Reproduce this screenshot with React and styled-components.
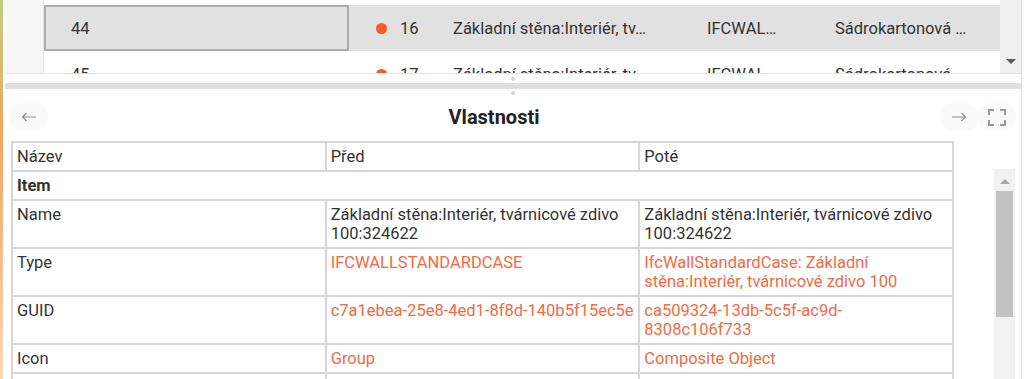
import React from "react";
import styled, { createGlobalStyle } from "styled-components";

const GlobalStyle = createGlobalStyle`
  html, body {
    margin: 0;
    padding: 0;
    background: #fff;
  }
  body {
    font-family: Roboto, "Noto Sans", "Liberation Sans", sans-serif;
    font-size: 16.5px;
    color: #333;
  }
`;

const Screen = styled.div`
  display: flex;
  width: 1024px;
  height: 379px;
  overflow: hidden;
  background: #fff;
`;

const AccentStripe = styled.div`
  width: 3px;
  flex-shrink: 0;
  margin-right: 2px;
  background: linear-gradient(to bottom, #bcd27c 0%, #f0a660 34%, #f4bf8f 70%, #f8d9bd 100%);
`;

const Workspace = styled.div`
  flex: 1;
  min-width: 0;
  display: flex;
  flex-direction: column;
  border-right: 1px solid #dfdfdf;
  margin-right: 2px;
`;

/* ---------- top grid ---------- */

const GridPanel = styled.div`
  display: flex;
  height: 73px;
  flex-shrink: 0;
  border-bottom: 1px solid #e3e3e3;
`;

const RowHeaderColumn = styled.div`
  width: 38px;
  flex-shrink: 0;
  background: #f7f7f7;
  border-right: 1px solid #e9e9e9;
`;

const GridRows = styled.div`
  flex: 1;
  min-width: 0;
  overflow: hidden;
  padding-top: 5px;
  display: flex;
  flex-direction: column;
`;

const GridRow = styled.div`
  display: flex;
  align-items: center;
  height: 46px;
  flex-shrink: 0;
  background: ${(p) => (p.$selected ? "#e1e1e1" : "#fff")};
`;

const IdCell = styled.div`
  width: 305px;
  height: 100%;
  box-sizing: border-box;
  flex-shrink: 0;
  display: flex;
  align-items: center;
  padding-left: 25px;
  border: 2px solid ${(p) => (p.$focused ? "#acacac" : "transparent")};
`;

const StatusCell = styled.div`
  width: 104px;
  flex-shrink: 0;
  display: flex;
  align-items: center;
`;

const StatusDot = styled.span`
  width: 11px;
  height: 11px;
  border-radius: 50%;
  background: #f15a29;
  margin-left: 27px;
  margin-right: 13px;
`;

const TextCell = styled.div`
  width: ${(p) => p.$w}px;
  flex-shrink: 0;
  white-space: nowrap;
  overflow: hidden;
`;

const GridScroll = styled.div`
  width: 21px;
  flex-shrink: 0;
  background: #f0f0f0;
  display: flex;
  flex-direction: column;
  justify-content: flex-end;
  align-items: center;
  padding-bottom: 9px;
  box-sizing: border-box;
`;

const ArrowDown = styled.span`
  width: 0;
  height: 0;
  border-left: 5px solid transparent;
  border-right: 5px solid transparent;
  border-top: 5px solid #5c5c5c;
`;

/* ---------- splitter ---------- */

const Splitter = styled.div`
  display: flex;
  flex-direction: column;
  align-items: center;
  padding-top: 3px;
  flex-shrink: 0;
`;

const SplitterDot = styled.span`
  width: 4px;
  height: 4px;
  border-radius: 50%;
  background: #d2d2d2;
`;

const SplitterBar = styled.div`
  align-self: stretch;
  height: 6px;
  margin: 2px 0;
  background: #dfdfdf;
`;

/* ---------- properties panel ---------- */

const PropsPanel = styled.section`
  flex: 1;
  min-height: 0;
  display: flex;
  flex-direction: column;
`;

const PanelHeader = styled.div`
  display: flex;
  align-items: center;
  height: 44px;
  margin-bottom: 2px;
  padding: 0 5px;
  flex-shrink: 0;
`;

const HeaderButton = styled.button`
  width: 38px;
  height: 28px;
  padding: 0;
  border: none;
  border-radius: 12px;
  background: #fafafa;
  color: #8c8c8c;
  display: flex;
  align-items: center;
  justify-content: center;
  cursor: pointer;
`;

const PanelTitle = styled.h2`
  flex: 1;
  margin: 0;
  text-align: center;
  font-size: 20px;
  font-weight: 700;
  color: #222;
`;

const PanelBody = styled.div`
  flex: 1;
  min-height: 0;
  display: flex;
  padding-left: 6px;
  overflow: hidden;
`;

const TableWrap = styled.div`
  width: 943px;
  flex-shrink: 0;
`;

const PropsTable = styled.table`
  width: 100%;
  border-collapse: collapse;
  table-layout: fixed;
`;

const Cell = styled.td`
  border: 2px solid #d6d6d6;
  padding: 4px 4px;
  line-height: 19px;
  vertical-align: top;
  white-space: pre-line;
  color: ${(p) => (p.$accent ? "#f26a45" : "#333")};
  font-weight: ${(p) => (p.$bold ? 700 : 400)};
`;

const VScroll = styled.div`
  width: 21px;
  margin-left: auto;
  margin-right: 6px;
  margin-top: 28px;
  background: #f1f1f1;
  display: flex;
  flex-direction: column;
  align-items: center;
  padding-top: 10px;
  box-sizing: border-box;
`;

const ArrowUp = styled.span`
  width: 0;
  height: 0;
  border-left: 5px solid transparent;
  border-right: 5px solid transparent;
  border-bottom: 5px solid #a6a6a6;
`;

const Thumb = styled.div`
  width: 17px;
  height: 126px;
  margin-top: 7px;
  background: #c1c1c1;
`;

const ArrowIcon = ({ dir }) => (
  <svg width="16" height="10" viewBox="0 0 16 10" fill="none" stroke="currentColor" strokeWidth="1.2">
    {dir === "left" ? (
      <path d="M15 5H1.5M5.5 1L1.5 5l4 4" />
    ) : (
      <path d="M1 5h13.5M10.5 1l4 4-4 4" />
    )}
  </svg>
);

const ExpandIcon = () => (
  <svg width="18" height="17" viewBox="0 0 18 17" fill="none" stroke="#9a9a9a" strokeWidth="2">
    <path d="M1 6V1h5M12 1h5v5M17 11v5h-5M6 16H1v-5" />
  </svg>
);

const gridRows = [
  { id: "44", num: "16", name: "Základní stěna:Interiér, tv…", type: "IFCWAL…", mat: "Sádrokartonová …", selected: true },
  { id: "45", num: "17", name: "Základní stěna:Interiér, tv…", type: "IFCWAL…", mat: "Sádrokartonová …" },
];

const props = [
  { label: "Name", before: "Základní stěna:Interiér, tvárnicové zdivo 100:324622", after: "Základní stěna:Interiér, tvárnicové zdivo 100:324622" },
  { label: "Type", before: "IFCWALLSTANDARDCASE", after: "IfcWallStandardCase: Základní\nstěna:Interiér, tvárnicové zdivo 100", changed: true },
  { label: "GUID", before: "c7a1ebea-25e8-4ed1-8f8d-140b5f15ec5e", after: "ca509324-13db-5c5f-ac9d-\n8308c106f733", changed: true },
  { label: "Icon", before: "Group", after: "Composite Object", changed: true },
  { label: "Description", before: "", after: "" },
];

export default function App() {
  return (
    <>
      <GlobalStyle />
      <Screen>
        <AccentStripe />
        <Workspace>
          <GridPanel>
            <RowHeaderColumn />
            <GridRows>
              {gridRows.map((r) => (
                <GridRow key={r.id} $selected={r.selected}>
                  <IdCell $focused={r.selected}>{r.id}</IdCell>
                  <StatusCell>
                    <StatusDot />
                    {r.num}
                  </StatusCell>
                  <TextCell $w={254}>{r.name}</TextCell>
                  <TextCell $w={128}>{r.type}</TextCell>
                  <TextCell $w={160}>{r.mat}</TextCell>
                </GridRow>
              ))}
            </GridRows>
            <GridScroll>
              <ArrowDown />
            </GridScroll>
          </GridPanel>

          <Splitter>
            <SplitterDot />
            <SplitterBar />
            <SplitterDot />
          </Splitter>

          <PropsPanel>
            <PanelHeader>
              <HeaderButton aria-label="Zpět">
                <ArrowIcon dir="left" />
              </HeaderButton>
              <PanelTitle>Vlastnosti</PanelTitle>
              <HeaderButton aria-label="Vpřed">
                <ArrowIcon dir="right" />
              </HeaderButton>
              <HeaderButton aria-label="Celá obrazovka">
                <ExpandIcon />
              </HeaderButton>
            </PanelHeader>
            <PanelBody>
              <TableWrap>
                <PropsTable>
                  <tbody>
                    <tr>
                      <Cell>Název</Cell>
                      <Cell>Před</Cell>
                      <Cell>Poté</Cell>
                    </tr>
                    <tr>
                      <Cell colSpan={3} $bold>
                        Item
                      </Cell>
                    </tr>
                    {props.map((p) => (
                      <tr key={p.label}>
                        <Cell>{p.label}</Cell>
                        <Cell $accent={p.changed}>{p.before}</Cell>
                        <Cell $accent={p.changed}>{p.after}</Cell>
                      </tr>
                    ))}
                  </tbody>
                </PropsTable>
              </TableWrap>
              <VScroll>
                <ArrowUp />
                <Thumb />
              </VScroll>
            </PanelBody>
          </PropsPanel>
        </Workspace>
      </Screen>
    </>
  );
}
